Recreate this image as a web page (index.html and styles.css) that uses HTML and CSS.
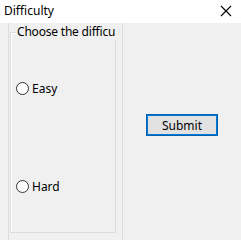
FILE: index.html
```html
<!DOCTYPE html>
<html>
<head>
<meta charset="utf-8">
<link rel="stylesheet" href="styles.css">
</head>
<body>
<div class="window">
  <div class="titlebar">
    <span class="title">Difficulty</span>
    <svg class="close" width="12" height="12" viewBox="0 0 12 12"><path d="M1 1 L11 11 M11 1 L1 11" stroke="#000" stroke-width="1.1" fill="none"/></svg>
  </div>
  <div class="client">
    <div class="panel">
      <div class="group">
        <div class="legend">Choose the difficu</div>
        <label class="radio easy"><span class="circle"></span><span>Easy</span></label>
        <label class="radio hard"><span class="circle"></span><span>Hard</span></label>
      </div>
    </div>
    <div class="right">
      <button class="submit">Submit</button>
    </div>
  </div>
</div>
</body>
</html>
```
FILE: styles.css
```css
html, body {
  margin: 0;
  padding: 0;
  background: #f0f0f0;
}
body {
  font-family: "Noto Sans", "Open Sans", sans-serif;
  font-size: 12px;
  color: #000;
}
.window {
  width: 241px;
  height: 240px;
  display: flex;
  flex-direction: column;
  overflow: hidden;
}
.titlebar {
  height: 23px;
  background: #fff;
  display: flex;
  align-items: center;
  justify-content: space-between;
  padding: 0 9px 0 4px;
  box-sizing: border-box;
  flex: none;
}
.title {
  font-size: 12px;
  line-height: 16px;
  margin-top: -2px;
}
.close {
  margin-top: -1px;
}
.client {
  flex: 1;
  display: flex;
}
.panel {
  margin-left: 8px;
  width: 115px;
  box-sizing: border-box;
  border-left: 1px solid #dcdcdc;
  border-right: 1px solid #dcdcdc;
  padding: 9px 0 0 1px;
  flex: none;
}
.group {
  position: relative;
  width: 106px;
  height: 201px;
  box-sizing: border-box;
  border: 1px solid #dcdcdc;
  box-shadow: inset 1px 1px 0 #fff;
}
.legend {
  position: absolute;
  top: -9px;
  left: 5px;
  padding: 0 1px;
  background: #f0f0f0;
  white-space: nowrap;
  line-height: 16px;
  font-size: 12px;
  letter-spacing: -0.2px;
}
.radio {
  position: absolute;
  left: 5px;
  display: flex;
  align-items: center;
  gap: 3px;
  line-height: 15px;
}
.easy { top: 48px; }
.hard { top: 146px; }
.circle {
  width: 11px;
  height: 11px;
  border: 1px solid #333;
  border-radius: 50%;
  background: #fff;
}
.right {
  flex: 1;
  padding: 91px 0 0 23px;
}
.submit {
  width: 72px;
  height: 22px;
  box-sizing: border-box;
  border: 1px solid #0063b1;
  box-shadow: inset 0 0 0 1px #0078d7;
  background: #e1e1e1;
  font-family: "Noto Sans", "Open Sans", sans-serif;
  font-size: 12px;
  padding: 0;
  color: #000;
}
```
